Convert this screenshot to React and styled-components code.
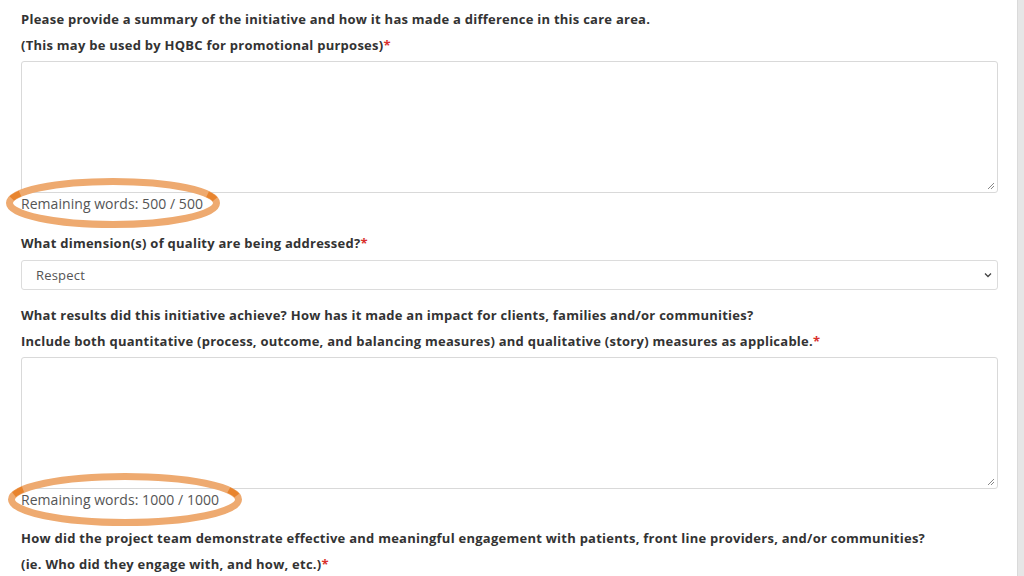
import styled, { createGlobalStyle } from "styled-components";

const GlobalStyle = createGlobalStyle`
  html, body {
    margin: 0;
    padding: 0;
    background: #ffffff;
  }
  body {
    font-family: "Open Sans", "Liberation Sans", sans-serif;
    overflow: hidden;
  }
`;

const Screen = styled.div`
  display: flex;
  width: 1024px;
  height: 576px;
  overflow: hidden;
`;

const Form = styled.div`
  flex: 1;
  display: flex;
  flex-direction: column;
  padding: 6px 19px 0 21px;
`;

const Scrollbar = styled.div`
  width: 6px;
  background: #e6e6e6;
  border-left: 1px solid #dadada;
`;

const Field = styled.div`
  position: relative;
  display: flex;
  flex-direction: column;
  margin-bottom: ${(p) => p.gap || 0}px;
`;

const Label = styled.div`
  font-size: 13px;
  font-weight: 700;
  color: #333;
  line-height: 26px;
  letter-spacing: 0.25px;
  white-space: nowrap;
`;

const Required = styled.span`
  color: #d9302c;
`;

const TextArea = styled.div`
  position: relative;
  margin-top: 3px;
  height: 130px;
  border: 1px solid #d9d9d9;
  border-radius: 3px;
  background: #fff;
`;

const Grip = styled.svg`
  position: absolute;
  right: 2px;
  bottom: 2px;
`;

const Counter = styled.div`
  font-size: 14px;
  color: #555;
  line-height: 22px;
  letter-spacing: 0.05px;
`;

const Select = styled.div`
  box-sizing: border-box;
  display: flex;
  align-items: center;
  justify-content: space-between;
  margin-top: 4px;
  height: 30px;
  border: 1px solid #dcdcdc;
  border-radius: 3px;
  padding: 0 4px 0 14px;
  font-size: 13px;
  letter-spacing: 0.2px;
  color: #555;
`;

const Ring = styled.svg`
  position: absolute;
  left: ${(p) => p.x}px;
  top: ${(p) => p.y}px;
  pointer-events: none;
  overflow: visible;
`;

// points along an ellipse, for the darker overlapping brush ends
const arc = (cx, cy, rx, ry, a0, a1) => {
  const pts = [];
  for (let i = 0; i <= 12; i++) {
    const a = ((a0 + ((a1 - a0) * i) / 12) * Math.PI) / 180;
    pts.push(`${(cx + rx * Math.cos(a)).toFixed(1)} ${(cy + ry * Math.sin(a)).toFixed(1)}`);
  }
  return "M " + pts.join(" L ");
};

const Lasso = ({ x, y, w, h }) => {
  const cx = w / 2;
  const cy = h / 2;
  const rx = w / 2 - 3.5;
  const ry = h / 2 - 3.5;
  return (
    <Ring x={x} y={y} width={w} height={h} viewBox={`0 0 ${w} ${h}`}>
      <ellipse
        cx={cx}
        cy={cy}
        rx={rx}
        ry={ry}
        fill="none"
        stroke="#eeaa70"
        strokeWidth="7"
      />
      <path d={arc(cx, cy, rx, ry, 192, 206)} fill="none" stroke="#e8842e" strokeWidth="6" />
      <path d={arc(cx, cy, rx, ry, 336, 350)} fill="none" stroke="#e8842e" strokeWidth="6" />
    </Ring>
  );
};

const ResizeGrip = () => (
  <Grip width="9" height="9" viewBox="0 0 9 9">
    <path d="M8 2 L2 8 M8 5 L5 8" stroke="#888" strokeWidth="1" />
  </Grip>
);

const Chevron = () => (
  <svg width="10" height="10" viewBox="0 0 10 10">
    <path d="M2 3.5 L5 6.5 L8 3.5" fill="none" stroke="#444" strokeWidth="1.3" />
  </svg>
);

export default function App() {
  return (
    <Screen>
      <GlobalStyle />
      <Form>
        <Field gap={15}>
          <Label>
            Please provide a summary of the initiative and how it has made a
            difference in this care area.
          </Label>
          <Label>
            (This may be used by HQBC for promotional purposes)
            <Required>*</Required>
          </Label>
          <TextArea>
            <ResizeGrip />
          </TextArea>
          <Counter>Remaining words: 500 / 500</Counter>
          <Lasso x={-15} y={172} w={214} h={50} />
        </Field>

        <Field gap={12}>
          <Label>
            What dimension(s) of quality are being addressed?
            <Required>*</Required>
          </Label>
          <Select>
            <span>Respect</span>
            <Chevron />
          </Select>
        </Field>

        <Field gap={14}>
          <Label>
            What results did this initiative achieve? How has it made an
            impact for clients, families and/or communities?
          </Label>
          <Label>
            Include both quantitative (process, outcome, and balancing
            measures) and qualitative (story) measures as applicable.
            <Required>*</Required>
          </Label>
          <TextArea>
            <ResizeGrip />
          </TextArea>
          <Counter>Remaining words: 1000 / 1000</Counter>
          <Lasso x={-13} y={171} w={234} h={53} />
        </Field>

        <Field>
          <Label>
            How did the project team demonstrate effective and meaningful
            engagement with patients, front line providers, and/or
            communities?
          </Label>
          <Label>
            (ie. Who did they engage with, and how, etc.)
            <Required>*</Required>
          </Label>
        </Field>
      </Form>
      <Scrollbar />
    </Screen>
  );
}
